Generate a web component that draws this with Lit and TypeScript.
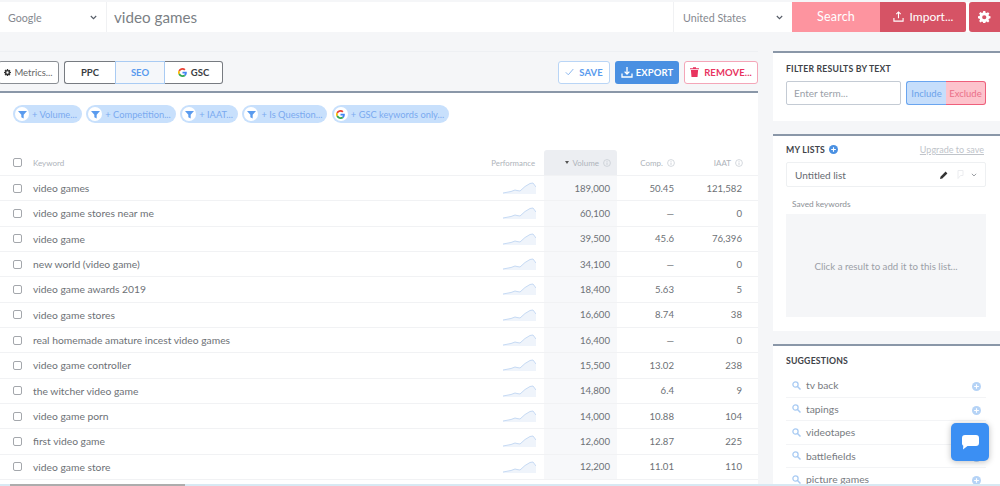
import { LitElement, html, css, svg } from "lit";
import { customElement } from "lit/decorators.js";

const googleG = (s: number) => html`<svg width=${s} height=${s} viewBox="0 0 48 48"><path fill="#EA4335" d="M24 9.5c3.5 0 6.700 1.200 9.200 3.600l6.900-6.900C35.900 2.400 30.500 0 24 0 14.600 0 6.500 5.400 2.600 13.200l8 6.200C12.500 13.600 17.800 9.500 24 9.500z"/><path fill="#4285F4" d="M47 24.500c0-1.600-.1-3.100-.4-4.500H24v9h13c-.6 3-2.300 5.500-4.800 7.200l7.700 6C44.400 38 47 31.800 47 24.500z"/><path fill="#FBBC05" d="M10.600 28.600A14.500 14.500 0 0 1 10.600 19.400l-8-6.200a24 24 0 0 0 0 21.600l8-6.200z"/><path fill="#34A853" d="M24 48c6.500 0 11.900-2.100 15.900-5.800l-7.700-6c-2.200 1.500-4.900 2.300-8.200 2.300-6.200 0-11.500-4.100-13.400-9.900l-8 6.200C6.500 42.600 14.600 48 24 48z"/></svg>`;

const funnel = html`<svg width="9" height="9" viewBox="0 0 10 10"><path fill="#5a9bee" d="M0 1h10L6.300 5.200V9.500L3.700 8V5.200z"/></svg>`;
const info = html`<svg class="info" width="8" height="8" viewBox="0 0 8 8"><circle cx="4" cy="4" r="3.400" fill="none" stroke="#c3c8d0" stroke-width=".7"/><path d="M4 3.500v2.400M4 2v.8" stroke="#c3c8d0" stroke-width=".8"/></svg>`;
const chevron = html`<svg width="7" height="5" viewBox="0 0 7 5"><path d="M.8 1l2.700 2.700L6.200 1" fill="none" stroke="#555b66" stroke-width="1.100"/></svg>`;
const chevronSoft = html`<svg width="6" height="4" viewBox="0 0 7 5"><path d="M.8 1l2.700 2.700L6.200 1" fill="none" stroke="#8b8f94" stroke-width="1.100"/></svg>`;
const gear = (s: number, c: string) => html`<svg width=${s} height=${s} viewBox="0 0 16 16"><path fill=${c} fill-rule="evenodd" d="M6.700 0h2.600l.4 2.100 1.300.6 1.800-1.200 1.800 1.800-1.200 1.800.6 1.300 2 .4v2.600l-2 .4-.6 1.300 1.200 1.800-1.800 1.800-1.800-1.200-1.300.6-.4 2H6.700l-.4-2-1.300-.6-1.800 1.200-1.800-1.800 1.200-1.800-.6-1.300-2-.4V6.700l2-.4.6-1.300-1.200-1.800 1.800-1.800L5 2.600l1.300-.6zM8 5.300a2.700 2.700 0 1 0 0 5.400 2.700 2.700 0 0 0 0-5.400z"/></svg>`;
const plus = (s: number, c: string) => html`<svg width=${s} height=${s} viewBox="0 0 10 10"><circle cx="5" cy="5" r="5" fill=${c}/><path d="M5 2.400v5.200M2.400 5h5.200" stroke="#fff" stroke-width="1.300"/></svg>`;
const uploadIco = (c: string, s = 11) => html`<svg width=${s} height=${s} viewBox="0 0 12 12"><path d="M6 8V1.200M3.600 3.400L6 1l2.400 2.400M1 7.500V11h10V7.500" fill="none" stroke=${c} stroke-width="1.200"/></svg>`;
const downloadIco = html`<svg width="12" height="12" viewBox="0 0 12 12"><path d="M6 1v6.800M3.600 5.600L6 8l2.400-2.400M1 7.500V11h10V7.500" fill="none" stroke="#fff" stroke-width="1.300"/></svg>`;
const trash = html`<svg width="9" height="10" viewBox="0 0 9 10"><path fill="#e8345f" d="M0 1.200h3V.2h3v1h3v1.100H0zM.9 3h7.200l-.6 7h-6z"/></svg>`;
const check = html`<svg width="9" height="8" viewBox="0 0 9 8"><path d="M.8 4.300L3.300 6.800 8.300 1" fill="none" stroke="#8db8ee" stroke-width="1"/></svg>`;
const search = html`<svg width="9" height="9" viewBox="0 0 9 9"><circle cx="3.500" cy="3.500" r="2.600" fill="none" stroke="#a9cbf3" stroke-width="1.300"/><path d="M5.500 5.500L8.500 8.500" stroke="#a9cbf3" stroke-width="1.500"/></svg>`;
const pencil = html`<svg width="8" height="8" viewBox="0 0 8 8"><path fill="#333" d="M0 8l.5-2.300L5.600.6l1.800 1.800L2.300 7.500z"/></svg>`;
const pin = html`<svg width="9" height="9" viewBox="0 0 9 9"><path d="M3 .5h5v5H5.500L3 8.500V.5z" fill="none" stroke="#ebecef" stroke-width="1"/></svg>`;
const spark = svg`<path d="M0 11L8 9.500 12 8 14 8.500 17 9 22 4.500 27 1.500 30 1 33 5V12H0z" fill="#eff4fb"/><path d="M0 11L8 9.500 12 8 14 8.500 17 9 22 4.500 27 1.500 30 1 33 5" fill="none" stroke="#c6daf4" stroke-width="1"/>`;

const rows: [string, string, string, string][] = [
  ["video games", "189,000", "50.45", "121,582"],
  ["video game stores near me", "60,100", "—", "0"],
  ["video game", "39,500", "45.6", "76,396"],
  ["new world (video game)", "34,100", "—", "0"],
  ["video game awards 2019", "18,400", "5.63", "5"],
  ["video game stores", "16,600", "8.74", "38"],
  ["real homemade amature incest video games", "16,400", "—", "0"],
  ["video game controller", "15,500", "13.02", "238"],
  ["the witcher video game", "14,800", "6.4", "9"],
  ["video game porn", "14,000", "10.88", "104"],
  ["first video game", "12,600", "12.87", "225"],
  ["video game store", "12,200", "11.01", "110"],
];
const chips = ["+ Volume...", "+ Competition...", "+ IAAT...", "+ Is Question..."];
const suggestions = ["tv back", "tapings", "videotapes", "battlefields", "picture games"];

@customElement("app-root")
export class AppRoot extends LitElement {
  static styles = css`
    :host { display: block; position: relative; width: 1000px; height: 486px; overflow: hidden; background: #f5f6f8; font-family: Lato, "Liberation Sans", sans-serif; color: #5b6068; }
    .top { display: flex; height: 30px; margin-top: 2px; background: #fff; }
    .engine { width: 107px; display: flex; align-items: center; justify-content: space-between; padding: 0 9px 0 8px; box-sizing: border-box; border-right: 1px solid #f0f1f3; font-size: 10.7px; color: #85898f; }
    .query { flex: 1; padding-left: 7px; display: flex; align-items: center; font-size: 15.2px; color: #7b7f85; padding-bottom: 1px; }
    .country { width: 119px; display: flex; align-items: center; justify-content: space-between; padding: 0 9px; box-sizing: border-box; border-left: 1px solid #f0f1f3; font-size: 10.7px; color: #85898f; }
    .search { width: 88px; background: #fd949f; color: #fff; display: flex; align-items: center; justify-content: center; font-size: 12.5px; letter-spacing: .2px; padding-bottom: 1px; box-sizing: border-box; }
    .import { width: 86px; background: #d65365; color: #fff; display: flex; align-items: center; justify-content: center; gap: 6px; font-size: 12px; border-radius: 0 2px 2px 0; padding-bottom: 1px; box-sizing: border-box; }
    .gear { width: 31px; margin-left: 3px; background: #d65365; display: flex; align-items: center; justify-content: center; border-radius: 3px 0 0 3px; }
    .main { display: flex; margin-top: 19px; }
    .left { width: 758px; }
    .right { width: 227px; margin-left: 15px; display: flex; flex-direction: column; gap: 13px; }
    .toolbar { display: flex; align-items: center; justify-content: space-between; height: 40px; border-top: 1px solid #eef0f3; box-sizing: border-box; }
    .tl, .tr { display: flex; align-items: center; height: 23px; margin-top: 1px; }
    .metrics { width: 61px; height: 23px; margin-left: -2px; box-sizing: border-box; border: 1px solid #8a8e94; border-radius: 3px; background: #fff; display: flex; align-items: center; justify-content: center; gap: 3px; font-size: 9.5px; color: #666; }
    .seg { display: flex; margin-left: 5px; height: 23px; }
    .seg > div { box-sizing: border-box; display: flex; align-items: center; justify-content: center; gap: 4px; font-size: 9.5px; font-weight: 700; color: #3a3d42; background: #fff; border: 1px solid #777b81; }
    .ppc { width: 51px; border-radius: 3px 0 0 3px; border-right: 0 !important; }
    .seo { width: 50px; color: #5a9bee !important; background: #f5f7fa !important; border-color: #a9cbf3 !important; }
    .gsc { width: 58px; border-radius: 0 3px 3px 0; border-left: 0 !important; }
    .tr { gap: 5px; }
    .tbtn { box-sizing: border-box; height: 23px; border-radius: 3px; display: flex; align-items: center; justify-content: center; gap: 5px; font-size: 9.5px; font-weight: 700; letter-spacing: .1px; }
    .save { width: 52px; border: 1px solid #b9d5f6; background: #fff; color: #5a9bee; }
    .export { width: 64px; background: #4a90e2; color: #fff; gap: 3px; }
    .remove { width: 74px; border: 1px solid #f4a6b8; background: #fff; color: #e8345f; }
    .card { background: #fff; border-top: 2px solid #8a97a8; }
    .tablecard { height: 393px; box-sizing: border-box; }
    .chips { display: flex; gap: 4.5px; padding: 12px 0 0 13px; height: 45px; box-sizing: content-box; }
    .chip { height: 18px; display: flex; align-items: center; gap: 3px; padding: 0 5px 0 2px; background: #c8e0fc; border-radius: 9px; font-size: 9.3px; color: #7aaaf0; white-space: nowrap; }
    .dot { width: 14px; height: 14px; border-radius: 50%; background: #fff; display: flex; align-items: center; justify-content: center; flex: none; }
    .row { display: grid; grid-template-columns: 33px 457px 54px 73px 58px 68px; height: 25.33px; align-items: stretch; box-sizing: border-box; border-bottom: 1px solid #f1f2f4; font-size: 10.3px; color: #6d7176; }
    .row.head { height: 26px; font-size: 8px; color: #aeb3ba; }
    .row > div { display: flex; align-items: center; min-width: 0; }
    .box { width: 9px; height: 9px; margin-left: 13px; box-sizing: border-box; border: 1px solid #a4a7ac; border-radius: 2px; }
    .num { justify-content: flex-end; font-size: 9.6px; }
    .perf { justify-content: flex-end; padding-right: 8px; }
    .row .vol { background: #f7f8fa; padding-right: 7px; justify-content: flex-end; font-size: 9.6px; }
    .row.head .vol { background: #eceef2; border-radius: 3px 3px 0 0; padding-right: 6px; gap: 4px; font-size: 8px; }
    .head .perf { font-size: 7.8px; padding-right: 9px; }
    .head .num { gap: 4px; font-size: 8px; padding-right: 0; }
    .tri { width: 0; height: 0; border: 2.500px solid transparent; border-top: 3px solid #555; border-bottom: 0; margin-right: -1px; }
    .c-comp { padding-right: 1px; }
    .c-iaat { padding-right: 1px; }
    .t { font-size: 8.7px; font-weight: 700; letter-spacing: .2px; color: #3e4248; text-transform: uppercase; }
    .filter { height: 70px; padding: 10px 13px 0; box-sizing: border-box; }
    .frow { display: flex; margin-top: 7px; height: 24px; }
    .fin { width: 115px; box-sizing: border-box; border: 1px solid #c4cbd4; border-radius: 2px; padding-left: 7px; display: flex; align-items: center; font-size: 10px; color: #9aa0a8; }
    .inc, .exc { width: 40px; box-sizing: border-box; display: flex; align-items: center; justify-content: center; font-size: 9.5px; }
    .inc { margin-left: 5px; background: #c6defb; border: 1px solid #6aa5ef; border-right: 0; color: #6ca2ea; border-radius: 3px 0 0 3px; }
    .exc { background: #fdc3cc; border: 1px solid #ee5f7b; border-left: 0; color: #ea6f88; border-radius: 0 3px 3px 0; }
    .lists { height: 197px; padding: 7px 14px 0 13px; box-sizing: border-box; }
    .lhead { display: flex; align-items: center; gap: 4px; height: 12px; }
    .upg { margin-left: auto; margin-right: 2px; font-size: 9px; color: #c0c4ca; text-decoration: underline; }
    .sel { margin-top: 7px; height: 25px; box-sizing: border-box; border: 1px solid #eef0f2; border-radius: 2px; display: flex; align-items: center; padding: 0 8px 0 8px; font-size: 10px; color: #666a70; gap: 7px; }
    .sel span { flex: 1; }
    .sk { font-size: 8.3px; color: #8c9096; margin: 12px 0 0 6px; line-height: 10px; }
    .drop { height: 103px; margin-top: 5px; background: #f5f6f8; display: flex; align-items: center; justify-content: center; font-size: 9.7px; color: #9ba0a7; }
    .sugg { flex: 1; padding: 9px 14px 0 13px; box-sizing: border-box; }
    .srow { display: flex; align-items: center; height: 23.5px; box-sizing: border-box; border-bottom: 1px solid #f3f4f6; padding-left: 6px; gap: 5px; font-size: 10.3px; color: #777b81; }
    .srow svg:last-child { margin-left: auto; margin-right: 5px; margin-top: 3px; }
    .slist { margin-top: 8px; }
    .chat { position: absolute; left: 951px; top: 423px; width: 38px; height: 38px; border-radius: 5px; background: #3b8ff3; box-shadow: 0 1px 6px rgba(0,0,0,.25); display: flex; align-items: center; justify-content: center; }
    .scroll { position: absolute; left: 0; right: 0; bottom: 0; height: 2px; background: #d8e9f3; }
    .thumb { width: 175px; height: 2px; margin-left: 10px; background: #adadad; }
  `;

  render() {
    return html`
      <div class="top">
        <div class="engine"><span>Google</span>${chevron}</div>
        <div class="query">video games</div>
        <div class="country"><span>United States</span>${chevron}</div>
        <div class="search">Search</div>
        <div class="import">${uploadIco("#fff")}<span>Import...</span></div>
        <div class="gear">${gear(12.5, "#fff")}</div>
      </div>
      <div class="main">
        <div class="left">
          <div class="toolbar">
            <div class="tl">
              <div class="metrics">${gear(7, "#333")}<span>Metrics...</span></div>
              <div class="seg">
                <div class="ppc">PPC</div>
                <div class="seo">SEO</div>
                <div class="gsc">${googleG(9)}<span>GSC</span></div>
              </div>
            </div>
            <div class="tr">
              <div class="tbtn save">${check}<span>SAVE</span></div>
              <div class="tbtn export">${downloadIco}<span>EXPORT</span></div>
              <div class="tbtn remove">${trash}<span>REMOVE...</span></div>
            </div>
          </div>
          <div class="card tablecard">
            <div class="chips">
              ${chips.map((c) => html`<div class="chip"><div class="dot">${funnel}</div>${c}</div>`)}
              <div class="chip"><div class="dot">${googleG(9)}</div>+ GSC keywords only...</div>
            </div>
            <div class="row head">
              <div><div class="box"></div></div>
              <div>Keyword</div>
              <div class="perf">Performance</div>
              <div class="vol"><span class="tri"></span><span>Volume</span>${info}</div>
              <div class="num c-comp"><span>Comp.</span>${info}</div>
              <div class="num c-iaat"><span>IAAT</span>${info}</div>
            </div>
            ${rows.map((r) => html`<div class="row">
              <div><div class="box"></div></div>
              <div>${r[0]}</div>
              <div class="perf"><svg width="33" height="12" viewBox="0 0 33 12">${spark}</svg></div>
              <div class="vol">${r[1]}</div>
              <div class="num c-comp">${r[2]}</div>
              <div class="num c-iaat">${r[3]}</div>
            </div>`)}
          </div>
        </div>
        <div class="right">
          <div class="card filter">
            <div class="t">Filter results by text</div>
            <div class="frow">
              <div class="fin">Enter term...</div>
              <div class="inc">Include</div>
              <div class="exc">Exclude</div>
            </div>
          </div>
          <div class="card lists">
            <div class="lhead"><span class="t">My lists</span>${plus(9, "#4a90e2")}<span class="upg">Upgrade to save</span></div>
            <div class="sel"><span>Untitled list</span>${pencil}${pin}${chevronSoft}</div>
            <div class="sk">Saved keywords</div>
            <div class="drop">Click a result to add it to this list...</div>
          </div>
          <div class="card sugg">
            <div class="t">Suggestions</div>
            <div class="slist">
              ${suggestions.map((s) => html`<div class="srow">${search}<span>${s}</span>${plus(9, "#b5d3f6")}</div>`)}
            </div>
          </div>
        </div>
      </div>
      <div class="chat"><svg width="17" height="15" viewBox="0 0 17 15"><path fill="#fff" d="M3 0h11a3 3 0 0 1 3 3v5a3 3 0 0 1-3 3H5.500L1 14.500l.3-3.700A3 3 0 0 1 0 8V3a3 3 0 0 1 3-3z"/></svg></div>
      <div class="scroll"><div class="thumb"></div></div>
    `;
  }
}
